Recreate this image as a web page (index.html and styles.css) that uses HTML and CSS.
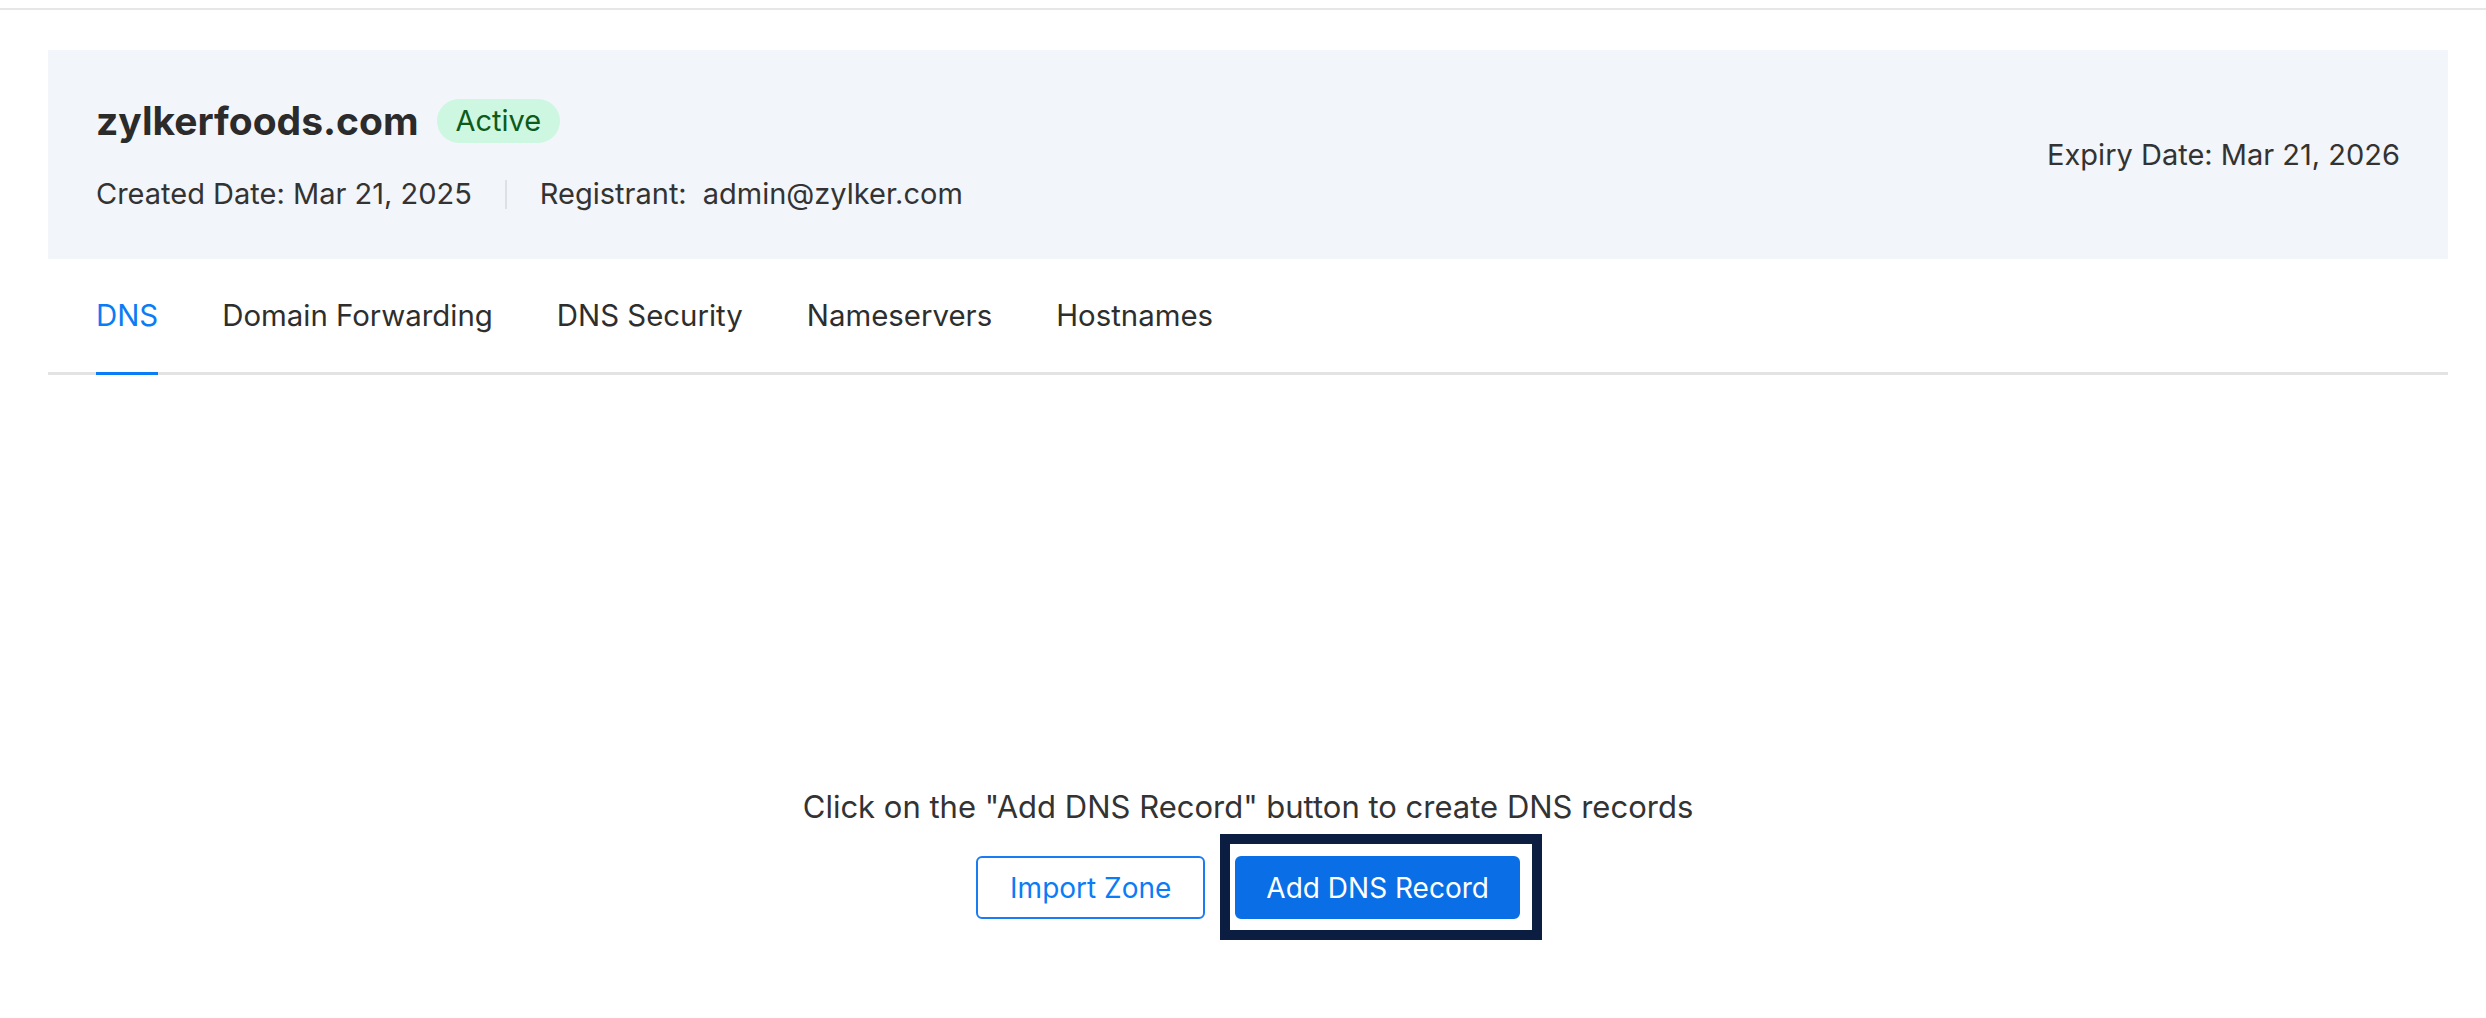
FILE: index.html
```html
<!DOCTYPE html>
<html lang="en">
<head>
<meta charset="utf-8">
<title>zylkerfoods.com - DNS</title>
<link rel="stylesheet" href="styles.css">
</head>
<body>
<div class="topline"></div>
<main class="page">
  <section class="panel">
    <div class="panel-left">
      <div class="title-row">
        <h1 class="domain">zylkerfoods.com</h1>
        <span class="badge">Active</span>
      </div>
      <div class="meta-row">
        <span class="meta">Created Date: Mar 21, 2025</span>
        <span class="divider"></span>
        <span class="meta">Registrant:<span class="meta-value">admin@zylker.com</span></span>
      </div>
    </div>
    <div class="panel-right">
      <span class="meta">Expiry Date: Mar 21, 2026</span>
    </div>
  </section>

  <nav class="tabs">
    <a class="tab active">DNS</a>
    <a class="tab">Domain Forwarding</a>
    <a class="tab">DNS Security</a>
    <a class="tab">Nameservers</a>
    <a class="tab">Hostnames</a>
  </nav>

  <section class="empty">
    <p class="empty-text">Click on the "Add DNS Record" button to create DNS records</p>
    <div class="actions">
      <button class="btn btn-outline">Import Zone</button>
      <span class="focus-ring"><button class="btn btn-primary">Add DNS Record</button></span>
    </div>
  </section>
</main>
</body>
</html>
```

FILE: styles.css
```css
* { box-sizing: border-box; }

html, body {
  margin: 0;
  padding: 0;
  background: #ffffff;
  font-family: Inter, "Noto Sans", "Liberation Sans", sans-serif;
  color: #2e2e2e;
}

body {
  min-height: 100vh;
}

.topline {
  height: 2px;
  margin-top: 8px;
  background: #e6e6e6;
}

.page {
  margin: 40px 38px 0 48px;
}

.panel {
  height: 209px;
  background: #f2f5fa;
  padding: 49px 48px 0 48px;
  display: flex;
  justify-content: space-between;
  align-items: flex-start;
}

.panel-left {
  display: flex;
  flex-direction: column;
}

.title-row {
  display: flex;
  align-items: center;
  height: 44px;
}

.domain {
  margin: 0;
  font-size: 39px;
  font-weight: 700;
  line-height: 44px;
  color: #2b2b2b;
}

.badge {
  margin-left: 18px;
  height: 44px;
  padding: 0 19px;
  border-radius: 22px;
  background: #cdf7e1;
  color: #0d5a1b;
  font-size: 29px;
  line-height: 44px;
}

.meta-row {
  margin-top: 31px;
  display: flex;
  align-items: center;
  height: 40px;
}

.meta {
  font-size: 29px;
  line-height: 40px;
  color: #333333;
  white-space: nowrap;
}

.meta-value {
  margin-left: 16px;
}

.divider {
  width: 2px;
  height: 29px;
  margin: 0 33px;
  background: #dde1e7;
}

.panel-right {
  align-self: center;
  margin-top: -49px;
}

.tabs {
  display: flex;
  height: 116px;
  padding-left: 48px;
  border-bottom: 3px solid #e3e3e3;
  gap: 64px;
}

.tab {
  display: flex;
  align-items: center;
  font-size: 29.4px;
  color: #2e2e2e;
  margin-bottom: -3px;
  border-bottom: 3px solid transparent;
  cursor: pointer;
}

.tab.active {
  color: #0a7cf5;
  border-bottom-color: #0a7cf5;
}

.empty {
  padding-top: 412px;
  padding-bottom: 60px;
  display: flex;
  flex-direction: column;
  align-items: center;
}

.empty-text {
  margin: 0;
  font-size: 31px;
  line-height: 40px;
  color: #333333;
}

.actions {
  margin-top: 29px;
  display: flex;
  align-items: center;
  gap: 30px;
}

.btn {
  height: 63px;
  padding: 0 32px;
  border-radius: 6px;
  font-family: inherit;
  font-size: 28px;
  border: 2px solid #1a7cf5;
  cursor: pointer;
}

.btn-outline {
  background: #ffffff;
  color: #0a7cf5;
}

.btn-primary {
  padding: 0 29px;
  background: #0a6fe6;
  border-color: #0a6fe6;
  color: #ffffff;
}

.focus-ring {
  position: relative;
  display: inline-flex;
}

.focus-ring::after {
  content: "";
  position: absolute;
  top: -22px;
  left: -15px;
  right: -22px;
  bottom: -21px;
  border: 10px solid #0b1e42;
  pointer-events: none;
}
```
